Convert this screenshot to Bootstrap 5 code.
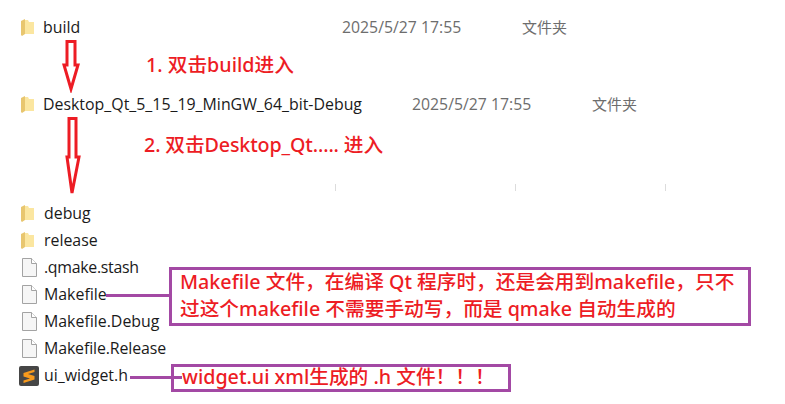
<!DOCTYPE html>
<html lang="zh-CN">
<head>
  <meta charset="UTF-8">
  <title>Makefile</title>
  <meta name="viewport" content="width=device-width, initial-scale=1">
  <link href="https://cdn.jsdelivr.net/npm/bootstrap@5.3.3/dist/css/bootstrap.min.css" rel="stylesheet">
  <style>
    html, body { background: #fff; overflow: hidden; }
    .stage { position: relative; width: 785px; height: 404px; padding-top: 14px; font-family: "Open Sans", "Noto Sans CJK SC", sans-serif; }
    .file-row { height: 27px; font-size: 15.9px; color: #1a1a1a; }
    .row-gap-a { margin-top: 50px; }
    .row-gap-b { margin-top: 82px; }
    .icon-cell { width: 43px; padding-left: 21px; flex: none; }
    .file-cell .icon-cell { width: 44px; padding-left: 22px; }
    .folder-cell .icon-cell { width: 44px; }
    .tight-name { letter-spacing: -.3px; }
    .tight-release { letter-spacing: -.12px; }
    .name-a { width: 299px; }
    .name-b { width: 369px; }
    .date-cell { width: 180px; color: #6d6d6d; font-size: 15.8px; }
    .type-cell { color: #6d6d6d; font-size: 15px; font-family: "Noto Sans CJK SC", sans-serif; }
    .note { position: absolute; color: #ed1c24; font-family: "Noto Sans", "Noto Sans CJK SC", sans-serif; font-size: 19.7px; font-weight: 500; white-space: nowrap; line-height: 26px; }
    .note-one { left: 146px; top: 52px; }
    .note-two { left: 144px; top: 132px; letter-spacing: -.13px; }
    .callout { position: absolute; border: 3px solid #a349a4; background: #fff; }
    .callout-make { left: 169px; top: 267px; width: 582px; height: 59px; padding: 0 0 0 8px; }
    .callout-ui { left: 171px; top: 364px; width: 340px; height: 28px; }
    .callout .note { position: static; }
    .callout-ui .note { margin: -1px 0 0 8px; line-height: 22px; display: block; }
    .callout-make .note { display: block; line-height: 27px; position: relative; top: -2px; }
    .wire { position: absolute; height: 3px; background: #a349a4; }
    .wire-make { left: 106px; top: 294px; width: 63px; }
    .wire-ui { left: 130px; top: 376px; width: 52px; }
    .arrow { position: absolute; }
    .arrow-one { left: 60px; top: 38px; }
    .arrow-two { left: 62px; top: 115px; }
    .sublime-icon { margin-left: -3px; display: block; }
    .col-tick { position: absolute; top: 184px; width: 1px; height: 7px; background: #dcdcdc; }
    .tick-a { left: 335px; }
    .tick-b { left: 515px; }
    .tick-c { left: 665px; }
  </style>
</head>
<body>

  <div class="stage">
    <!-- file list -->
    <div class="file-row d-flex align-items-center">
      <div class="icon-cell"><svg width="13" height="17" viewBox="0 0 13 17" class="d-block"><path d="M0 2 4 0v15L1 17 0 16z" fill="#e8c66f"/><path d="M4 1h3l1 2h5v12H4z" fill="#fbe6a0"/></svg></div>
      <div class="name-a">build</div>
      <div class="date-cell">2025/5/27 17:55</div>
      <div class="type-cell">文件夹</div>
    </div>
    <div class="file-row row-gap-a d-flex align-items-center">
      <div class="icon-cell"><svg width="13" height="17" viewBox="0 0 13 17" class="d-block"><path d="M0 2 4 0v15L1 17 0 16z" fill="#e8c66f"/><path d="M4 1h3l1 2h5v12H4z" fill="#fbe6a0"/></svg></div>
      <div class="name-b">Desktop_Qt_5_15_19_MinGW_64_bit-Debug</div>
      <div class="date-cell">2025/5/27 17:55</div>
      <div class="type-cell">文件夹</div>
    </div>
    <div class="file-row folder-cell row-gap-b d-flex align-items-center">
      <div class="icon-cell"><svg width="13" height="17" viewBox="0 0 13 17" class="d-block"><path d="M0 2 4 0v15L1 17 0 16z" fill="#e8c66f"/><path d="M4 1h3l1 2h5v12H4z" fill="#fbe6a0"/></svg></div>
      <div>debug</div>
    </div>
    <div class="file-row folder-cell d-flex align-items-center">
      <div class="icon-cell"><svg width="13" height="17" viewBox="0 0 13 17" class="d-block"><path d="M0 2 4 0v15L1 17 0 16z" fill="#e8c66f"/><path d="M4 1h3l1 2h5v12H4z" fill="#fbe6a0"/></svg></div>
      <div>release</div>
    </div>
    <div class="file-row file-cell d-flex align-items-center">
      <div class="icon-cell"><svg width="15" height="19" viewBox="0 0 15 19" class="d-block"><path d="M.5.5h9l5 5v13H.5z" fill="#f6f6f6" stroke="#a3a3a3"/><path d="M9.5.5v5h5" fill="#fff" stroke="#a3a3a3"/></svg></div>
      <div class="tight-name">.qmake.stash</div>
    </div>
    <div class="file-row file-cell d-flex align-items-center">
      <div class="icon-cell"><svg width="15" height="19" viewBox="0 0 15 19" class="d-block"><path d="M.5.5h9l5 5v13H.5z" fill="#f6f6f6" stroke="#a3a3a3"/><path d="M9.5.5v5h5" fill="#fff" stroke="#a3a3a3"/></svg></div>
      <div>Makefile</div>
    </div>
    <div class="file-row file-cell d-flex align-items-center">
      <div class="icon-cell"><svg width="15" height="19" viewBox="0 0 15 19" class="d-block"><path d="M.5.5h9l5 5v13H.5z" fill="#f6f6f6" stroke="#a3a3a3"/><path d="M9.5.5v5h5" fill="#fff" stroke="#a3a3a3"/></svg></div>
      <div>Makefile.Debug</div>
    </div>
    <div class="file-row file-cell d-flex align-items-center">
      <div class="icon-cell"><svg width="15" height="19" viewBox="0 0 15 19" class="d-block"><path d="M.5.5h9l5 5v13H.5z" fill="#f6f6f6" stroke="#a3a3a3"/><path d="M9.5.5v5h5" fill="#fff" stroke="#a3a3a3"/></svg></div>
      <div class="tight-release">Makefile.Release</div>
    </div>
    <div class="file-row file-cell d-flex align-items-center">
      <div class="icon-cell"><svg width="20" height="20" viewBox="0 0 20 20" class="sublime-icon"><rect width="20" height="20" rx="2" fill="#464646"/><path d="M15.500 3.500 4.500 7v3.500l6.500 2-6.500 2V17l11-3.500V10L9 8l6.500-2z" fill="#f89a1c"/></svg></div>
      <div>ui_widget.h</div>
    </div>

    <!-- leftover column dividers from the screenshot -->
    <div class="col-tick tick-a"></div>
    <div class="col-tick tick-b"></div>
    <div class="col-tick tick-c"></div>

    <!-- annotations drawn over the list -->
    <svg class="arrow arrow-one" width="20" height="55" viewBox="0 0 20 55"><path d="M7 3.500h8V27h3L11 51 4 27h3z" fill="none" stroke="#ed1c24" stroke-width="3"/></svg>
    <svg class="arrow arrow-two" width="20" height="82" viewBox="0 0 20 82"><path d="M7 3.500h7V42h3L10 78 5 42h2z" fill="none" stroke="#ed1c24" stroke-width="3"/></svg>
    <div class="note note-one">1. 双击build进入</div>
    <div class="note note-two">2. 双击Desktop_Qt..... 进入</div>
    <div class="wire wire-make"></div>
    <div class="callout callout-make">
      <span class="note">Makefile 文件，在编译 Qt 程序时，还是会用到makefile，只不</span>
      <span class="note">过这个makefile 不需要手动写，而是 qmake 自动生成的</span>
    </div>
    <div class="callout callout-ui"><span class="note">widget.ui xml生成的 .h 文件！！！</span></div>
    <div class="wire wire-ui"></div>
  </div>

  <script src="https://cdn.jsdelivr.net/npm/bootstrap@5.3.3/dist/js/bootstrap.bundle.min.js"></script>
</body>
</html>
